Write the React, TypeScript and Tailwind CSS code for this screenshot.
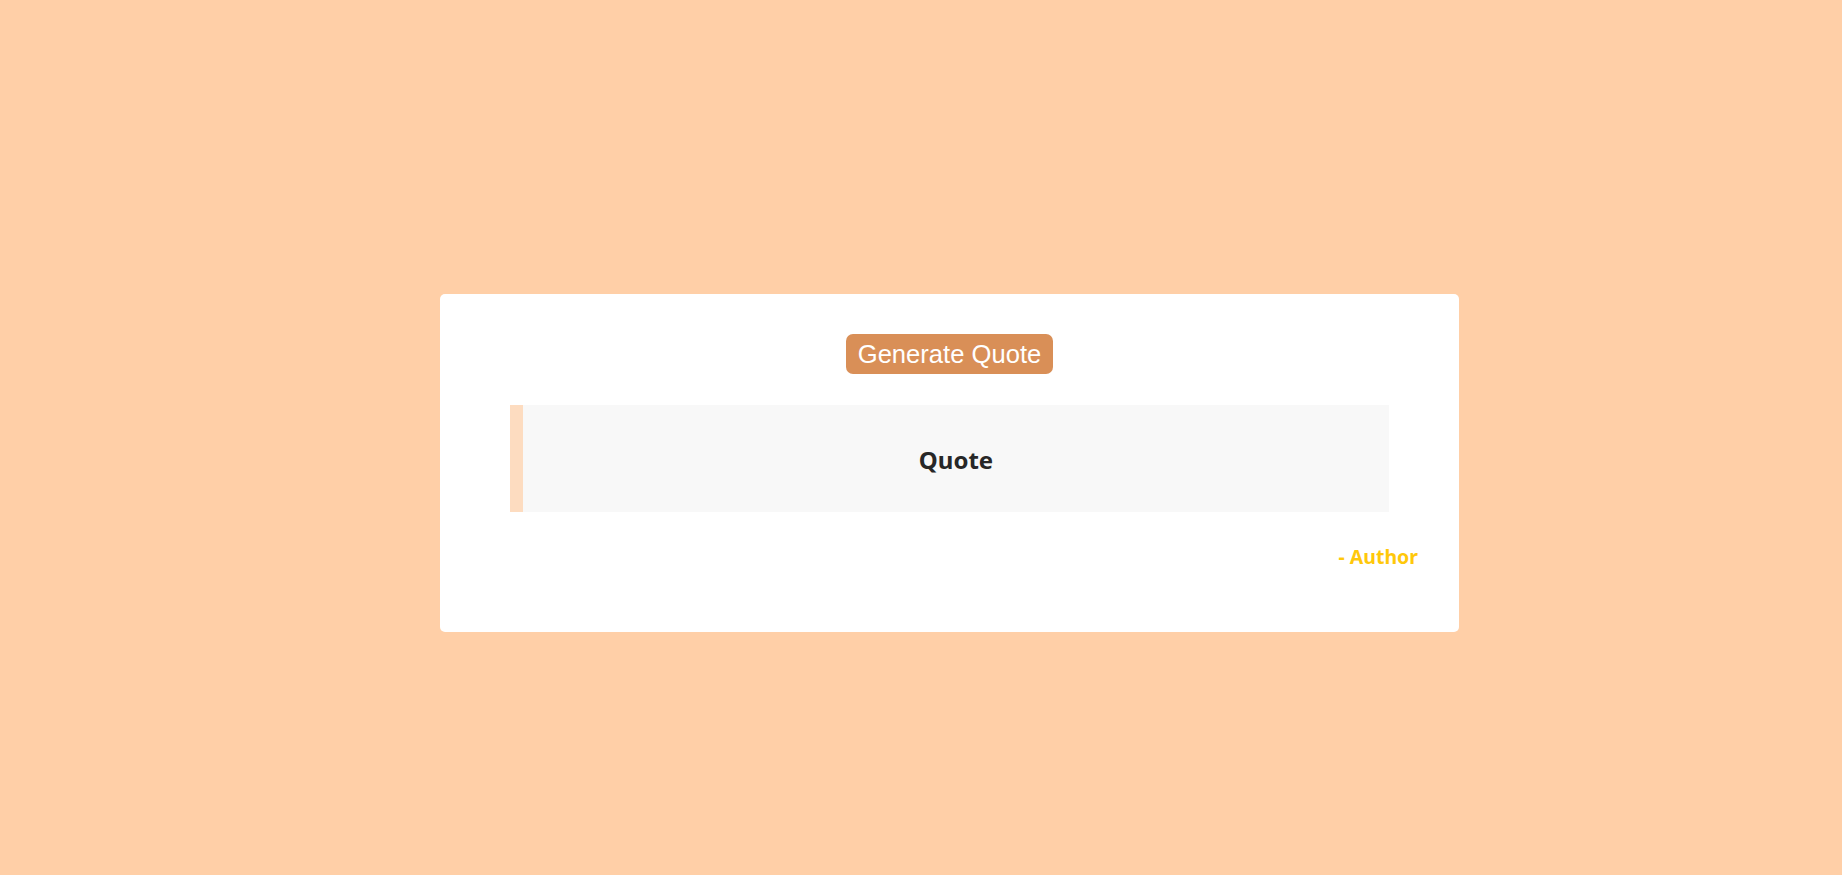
import { useState } from "react";

const quotes = [{ text: "Quote", author: "Author" }];

export default function App() {
  const [quote] = useState(quotes[0]);

  return (
    <div className="min-h-screen w-full bg-[#ffcfa7] pt-[294px] pl-[440px]">
      <div className="w-[1019px] h-[338px] rounded-[5px] bg-white pt-[40px] flex flex-col">
        <div className="flex justify-center">
          <button
            type="button"
            className="h-[40px] px-[12px] rounded-[7px] bg-[#d98f57] text-white text-[25.6px] leading-[30px] font-['Liberation_Sans',Arial,sans-serif]"
          >
            Generate Quote
          </button>
        </div>
        <blockquote className="mt-[31px] mx-[70px] h-[107px] flex items-center justify-center bg-[#f8f8f8] border-l-[13px] border-[#fddcc0]">
          <p className="mt-[2px] text-[24px] font-bold text-[#272727] font-['Noto_Sans',sans-serif]">
            {quote.text}
          </p>
        </blockquote>
        <div className="mt-[32px] flex justify-end pr-[41px]">
          <span className="text-[19.5px] leading-[26px] font-bold text-[#ffc80a] font-['Noto_Sans',sans-serif]">
            - {quote.author}
          </span>
        </div>
      </div>
    </div>
  );
}
